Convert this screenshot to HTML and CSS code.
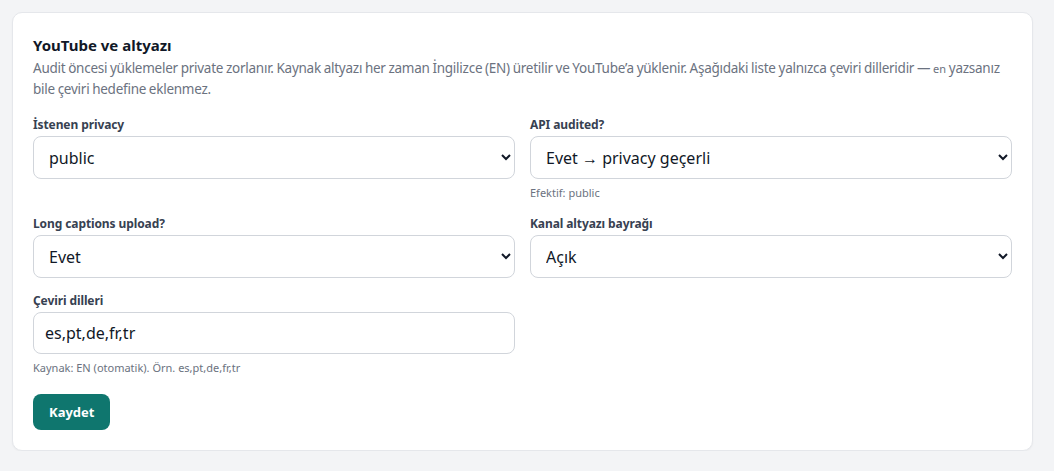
FILE: index.html
```html
<!DOCTYPE html>
<html lang="tr">
<head>
<meta charset="utf-8">
<title>YouTube ve altyazı</title>
<link rel="stylesheet" href="styles.css">
</head>
<body>
<section class="card">
  <h2 class="title">YouTube ve altyazı</h2>
  <p class="desc">Audit öncesi yüklemeler private zorlanır. Kaynak altyazı her zaman İngilizce (EN) üretilir ve YouTube’a yüklenir. Aşağıdaki liste yalnızca çeviri dilleridir — <code>en</code> yazsanız bile çeviri hedefine eklenmez.</p>
  <div class="grid">
    <div class="field">
      <label class="label">İstenen privacy</label>
      <select class="control"><option>public</option><option>unlisted</option><option>private</option></select>
    </div>
    <div class="field">
      <label class="label">API audited?</label>
      <select class="control"><option>Evet → privacy geçerli</option><option>Hayır</option></select>
      <div class="hint">Efektif: public</div>
    </div>
    <div class="field">
      <label class="label">Long captions upload?</label>
      <select class="control"><option>Evet</option><option>Hayır</option></select>
    </div>
    <div class="field">
      <label class="label">Kanal altyazı bayrağı</label>
      <select class="control"><option>Açık</option><option>Kapalı</option></select>
    </div>
    <div class="field">
      <label class="label">Çeviri dilleri</label>
      <input class="control input" type="text" value="es,pt,de,fr,tr">
      <div class="hint">Kaynak: EN (otomatik). Örn. es,pt,de,fr,tr</div>
    </div>
  </div>
  <button class="btn" type="button">Kaydet</button>
</section>
</body>
</html>
```

FILE: styles.css
```css
html, body {
  margin: 0;
  background: #f3f4f6;
}
body {
  padding: 12px 0 0 12px;
  font-family: "Noto Sans", "Open Sans", sans-serif;
  color: #111827;
}
.card {
  box-sizing: border-box;
  width: 1021px;
  background: #ffffff;
  border: 1px solid #e5e7eb;
  border-radius: 10px;
  box-shadow: 0 1px 2px rgba(0, 0, 0, 0.04);
  padding: 21px 20px 20px;
}
.title {
  margin: 0;
  font-size: 15px;
  line-height: 22px;
  font-weight: 700;
  color: #111827;
}
.desc {
  margin: 2px 0 0;
  font-size: 13.5px;
  line-height: 20px;
  word-spacing: -0.5px;
  letter-spacing: -0.25px;
  color: #6b7280;
}
.desc code {
  font-family: inherit;
  font-size: 11px;
  letter-spacing: 0;
}
.grid {
  margin-top: 18px;
  display: grid;
  grid-template-columns: 1fr 1fr;
  column-gap: 15px;
  row-gap: 15px;
  align-items: start;
}
.field {
  display: flex;
  flex-direction: column;
}
.label {
  font-size: 12px;
  line-height: 16px;
  font-weight: 700;
  letter-spacing: -0.1px;
  color: #374151;
  margin-bottom: 3px;
}
.control {
  box-sizing: border-box;
  height: 43px;
  width: 100%;
  border: 1px solid #d1d5db;
  border-radius: 8px;
  background-color: #ffffff;
  font-family: inherit;
  font-size: 16px;
  color: #111827;
  padding: 0 8px 0 11px;
  margin: 0;
}
.input {
  height: 42px;
  padding: 0 11px;
}
.hint {
  margin-top: 6px;
  font-size: 11px;
  line-height: 16px;
  color: #6b7280;
}
.btn {
  margin-top: 18px;
  height: 36px;
  padding: 0 16px;
  border: none;
  border-radius: 8px;
  background: #0f766e;
  color: #ffffff;
  font-family: inherit;
  font-size: 13px;
  font-weight: 700;
}
```
